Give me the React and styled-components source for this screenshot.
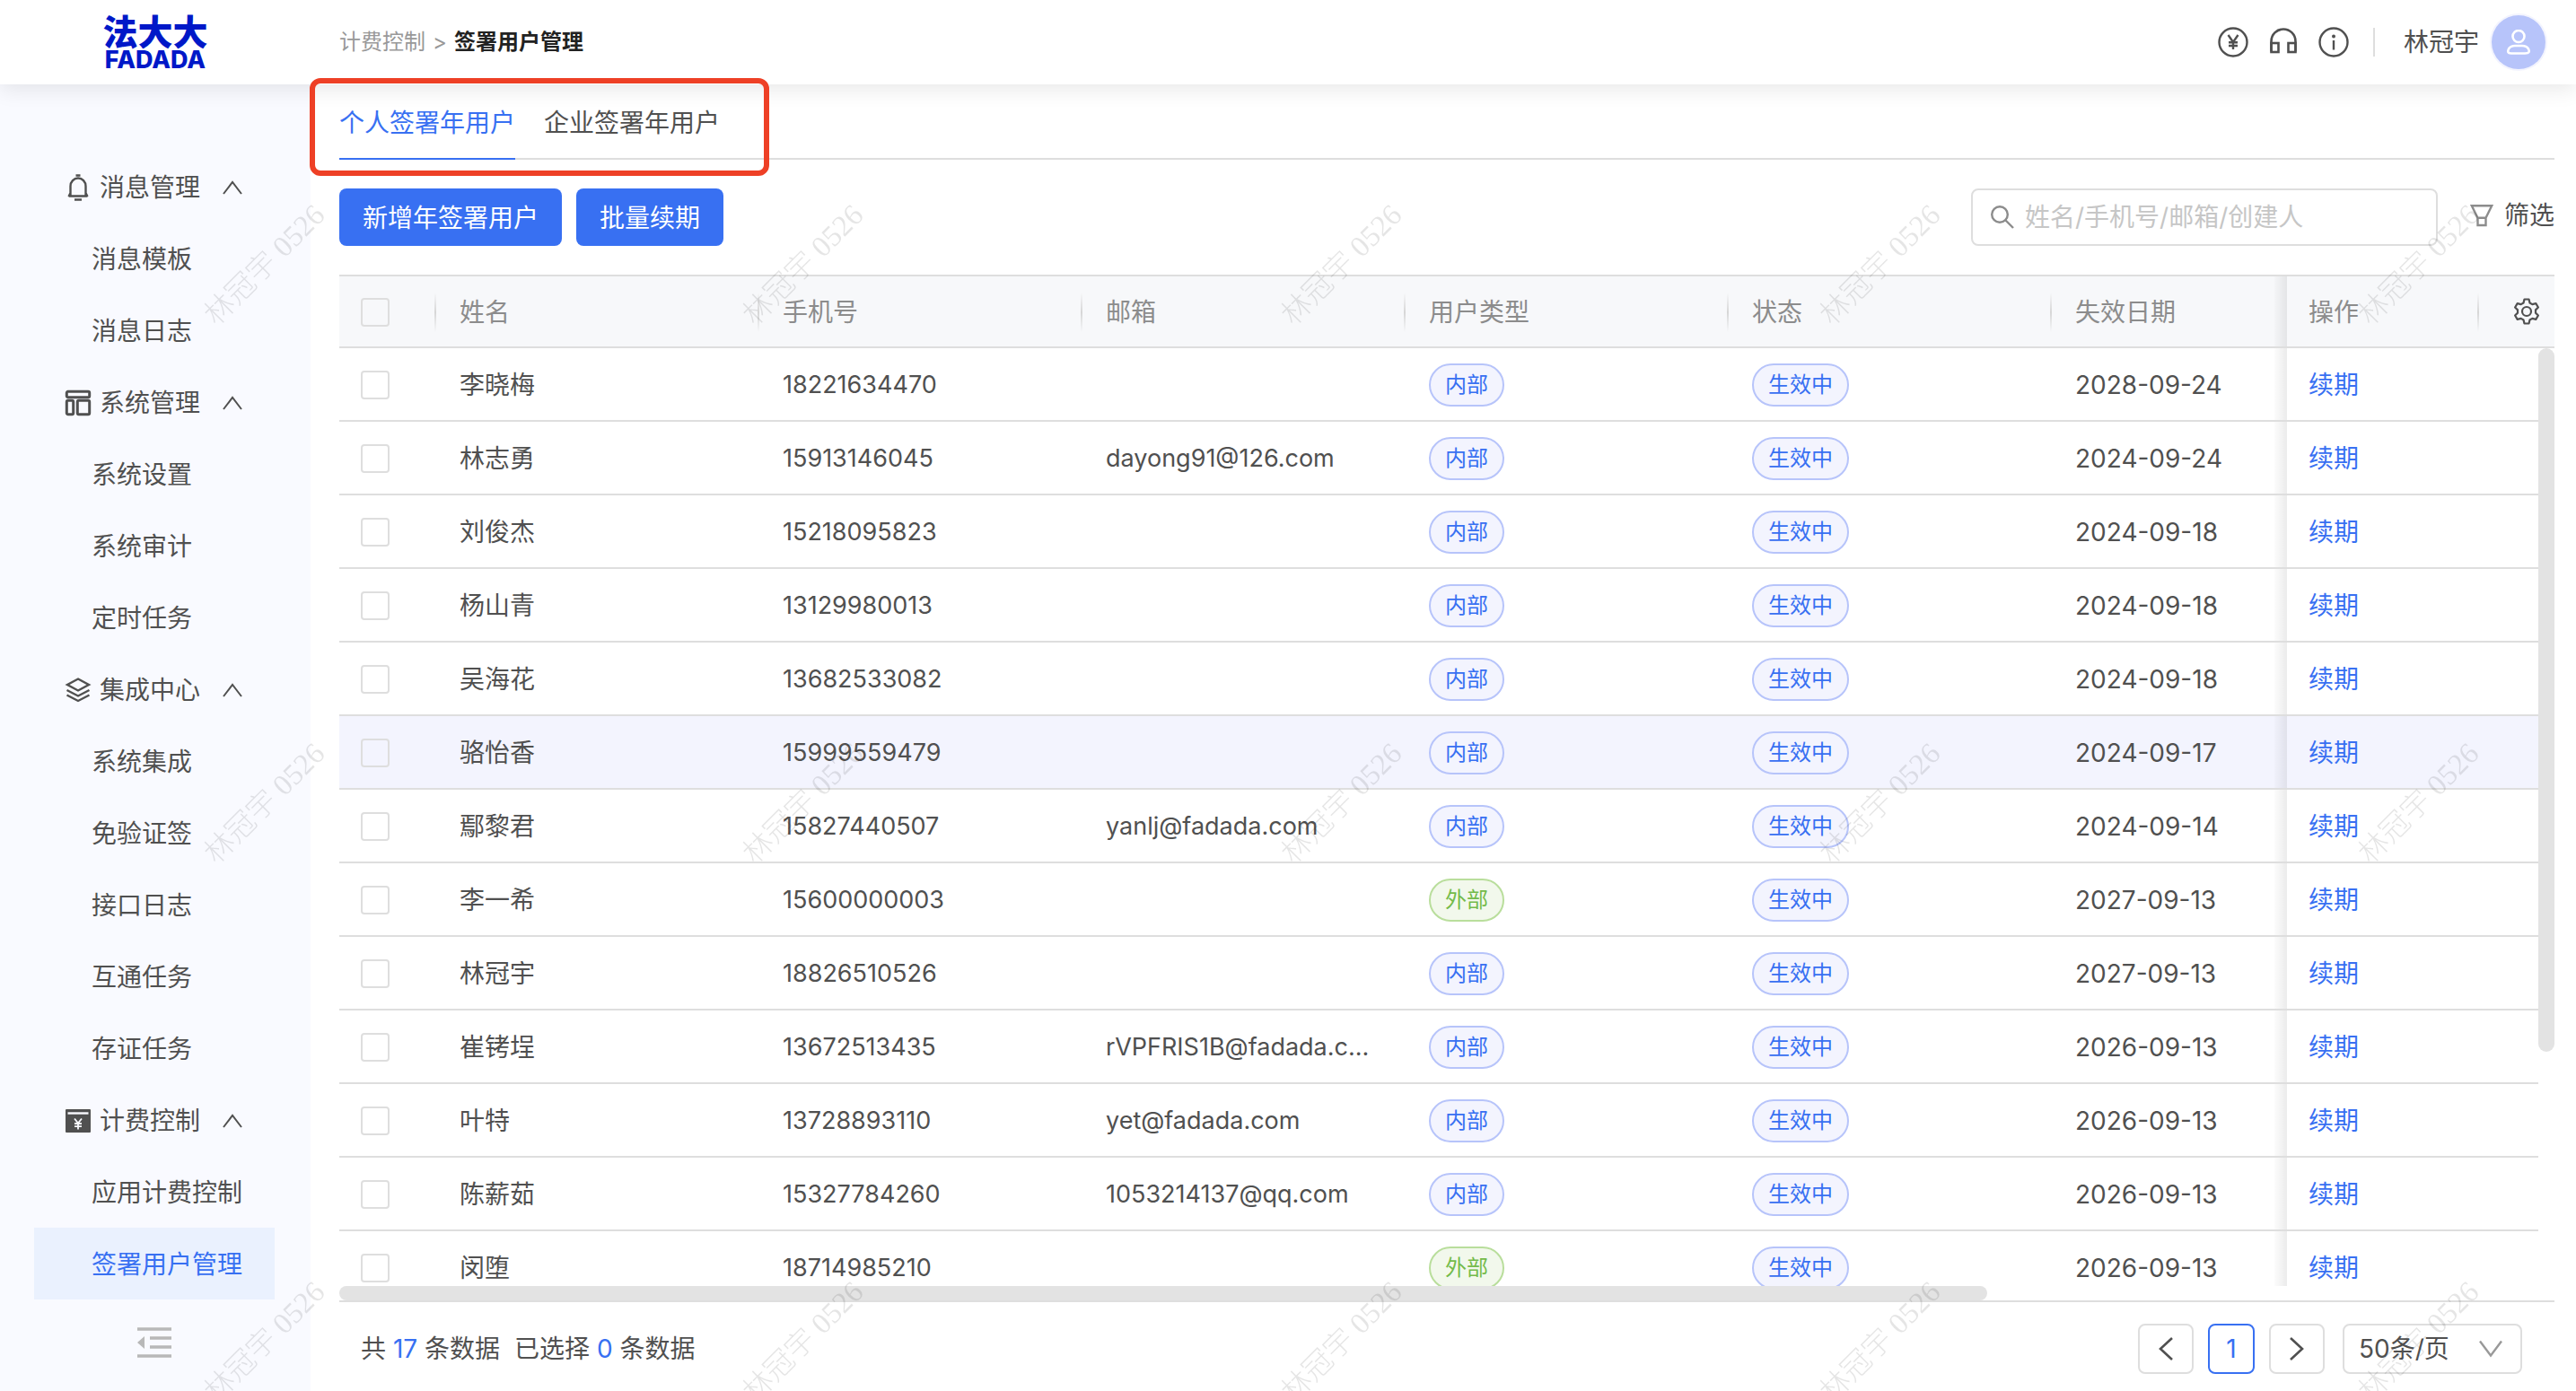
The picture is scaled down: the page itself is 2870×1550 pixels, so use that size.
import React from "react";
import styled, { createGlobalStyle } from "styled-components";

const GlobalStyle = createGlobalStyle`
  *, *::before, *::after {
    box-sizing: border-box;
  }
  body {
    margin: 0;
    background: #fff;
    color: #505050;
    font: 28px/40px Inter, "Noto Sans CJK SC", sans-serif;
  }
  button, input, select {
    font: inherit;
    color: inherit;
    margin: 0;
  }
  button {
    padding: 0;
    border: 0;
    background: none;
    cursor: pointer;
  }
  a {
    color: inherit;
    text-decoration: none;
  }
`;

const Page = styled.div`
  height: 100vh;
  display: flex;
  flex-direction: column;
  overflow: hidden;
`;

// Header
const Header = styled.header`
  height: 94px;
  flex: none;
  display: flex;
  align-items: center;
  padding-right: 34px;
  background: #fff;
  box-shadow: 0 6px 22px rgba(0, 0, 0, 0.09);
  position: relative;
  z-index: 2;
`;
const Logo = styled.a`
  width: 346px;
  display: flex;
  flex-direction: column;
  align-items: center;
  color: #0018c8;
`;
const LogoName = styled.span`
  font: 900 39px/39px "Noto Sans CJK SC", sans-serif;
`;
const LogoLatin = styled.span`
  font: 800 27px/27px Inter, sans-serif;
`;
const Breadcrumb = styled.nav`
  display: flex;
  gap: 8px;
  padding-left: 32px;
  flex: 1;
  font-size: 24px;
  color: #999;
  strong {
    color: #222;
    font-weight: 700;
  }
`;
const HeaderIcons = styled.div`
  display: flex;
  gap: 22px;
`;
const IconButton = styled.button`
  display: flex;
  align-items: center;
  justify-content: center;
`;
const Divider = styled.span`
  width: 2px;
  height: 32px;
  margin: 0 32px 0 27px;
  background: #dedede;
`;
const User = styled.button`
  display: flex;
  align-items: center;
  gap: 14px;
`;
const Avatar = styled.span`
  width: 60px;
  height: 60px;
  display: flex;
  align-items: center;
  justify-content: center;
  border-radius: 50%;
  background: #b7c4fa;
  box-shadow: 0 0 0 2px #f3f4fe;
`;

// Sidebar
const Body = styled.div`
  flex: 1;
  min-height: 0;
  display: flex;
`;
const Sidebar = styled.aside`
  width: 346px;
  flex: none;
  display: flex;
  flex-direction: column;
  padding: 74px 40px 0 38px;
  background: #f9faff;
`;
const GroupTitle = styled.button`
  width: 100%;
  height: 80px;
  display: flex;
  align-items: center;
  padding: 2px 0 0 34px;
  gap: 9px;
  svg:last-child {
    margin-left: 16px;
  }
`;
const MenuItem = styled.a`
  height: 80px;
  display: flex;
  align-items: center;
  padding: 2px 0 0 64px;
  color: ${(p) => (p.$active ? "#3870f2" : "inherit")};
  background: ${(p) => (p.$active ? "#eaf1fe" : "none")};
`;
const Collapse = styled.button`
  height: 96px;
  display: flex;
  align-items: center;
  justify-content: center;
`;

// Content
const Main = styled.main`
  flex: 1;
  min-width: 0;
  display: flex;
  flex-direction: column;
  padding: 0 24px 0 32px;
`;
const Tabs = styled.nav`
  height: 84px;
  flex: none;
  display: flex;
  gap: 32px;
  border-bottom: 2px solid #dedede;
  position: relative;
`;
const Tab = styled.a`
  margin-bottom: -2px;
  padding-top: 4px;
  display: flex;
  align-items: center;
  color: ${(p) => (p.$active ? "#3870f2" : "inherit")};
  border-bottom: 2px solid ${(p) => (p.$active ? "#3870f2" : "transparent")};
`;
const Highlight = styled.span`
  position: absolute;
  z-index: 3;
  top: -7px;
  left: -33px;
  width: 512px;
  height: 109px;
  border: 6px solid #ee4026;
  border-radius: 12px;
  pointer-events: none;
`;
const Toolbar = styled.div`
  flex: none;
  display: flex;
  align-items: center;
  gap: 16px;
  padding: 32px 0;
`;
const PrimaryButton = styled.button`
  height: 64px;
  padding: 2px 26px 0;
  border-radius: 8px;
  background: #3870f2;
  color: #fff;
`;
const SearchBox = styled.label`
  width: 520px;
  height: 64px;
  margin-left: auto;
  display: flex;
  align-items: center;
  gap: 12px;
  padding: 0 20px;
  border: 2px solid #dedede;
  border-radius: 8px;
  input {
    flex: 1;
    min-width: 0;
    padding: 0;
    border: 0;
    outline: 0;
    background: none;
  }
  input::placeholder {
    color: #c6c6c6;
  }
`;
const FilterButton = styled.button`
  display: flex;
  align-items: center;
  gap: 12px;
  padding: 0 0 4px 20px;
`;

// Table
const TableArea = styled.div`
  flex: 1;
  min-height: 0;
  overflow: hidden;
  position: relative;
`;
const Table = styled.table`
  width: 100%;
  min-width: 2400px;
  table-layout: fixed;
  border-collapse: separate;
  border-spacing: 0;
`;
const Col = styled.col`
  width: ${(p) => (p.$width ? `${p.$width}px` : "auto")};
`;
const Th = styled.th`
  height: 82px;
  padding: 2px 0 0 ${(p) => (p.$check ? 24 : 26)}px;
  text-align: left;
  font-weight: 400;
  color: #8c8c8c;
  background: #f7f8fa;
  border-top: 2px solid #dedede;
  border-bottom: 2px solid #dedede;
  position: relative;
  &::after {
    content: "";
    display: ${(p) => (p.$line ? "block" : "none")};
    position: absolute;
    top: 18px;
    right: -1px;
    width: 3px;
    height: 44px;
    background: linear-gradient(transparent, #d6d6d6, transparent);
  }
`;
const fixedShadow = `
  position: relative;
  padding-left: 24px;
  &::before {
    content: "";
    position: absolute;
    top: 0;
    bottom: 0;
    left: -14px;
    width: 14px;
    background: linear-gradient(to right, rgba(0, 0, 0, 0.01), rgba(0, 0, 0, 0.08));
  }
`;
const ActionTh = styled(Th)`
  ${fixedShadow}
`;
const GearTh = styled(Th)`
  padding: 0 16px 0 0;
  button {
    margin-left: auto;
  }
`;
const Tr = styled.tr`
  background: ${(p) => (p.$active ? "#f3f4fe" : "#fff")};
`;
const Td = styled.td`
  height: 82px;
  padding: 2px 0 0 ${(p) => (p.$check ? 24 : 26)}px;
  border-bottom: 2px solid #dedede;
  font-size: ${(p) => (p.$compact ? 27 : 28)}px;
  white-space: nowrap;
`;
const ActionTd = styled(Td)`
  ${fixedShadow}
  color: #3870f2;
`;
const Checkbox = styled.input`
  appearance: none;
  display: block;
  width: 32px;
  height: 32px;
  margin: 0;
  border: 2px solid #dedede;
  border-radius: 4px;
`;
const Tag = styled.span`
  display: flex;
  align-items: center;
  width: fit-content;
  height: 48px;
  padding: 0 16px;
  font-size: 24px;
  border-radius: 24px;
  color: ${(p) => (p.$green ? "#74bb4a" : "#3870f2")};
  background: ${(p) => (p.$green ? "#f2f8ec" : "#f3f4fe")};
  border: 2px solid ${(p) => (p.$green ? "#b9de9c" : "#b7c4fa")};
`;
const TrackY = styled.div`
  position: absolute;
  top: 82px;
  right: 0;
  bottom: 0;
  width: 18px;
  background: #fff;
`;
const ThumbY = styled.div`
  height: 75%;
  border-radius: 9px;
  background: #e3e3e3;
`;
const TrackX = styled.div`
  height: 16px;
  flex: none;
  padding-right: 632px;
`;
const ThumbX = styled.div`
  height: 16px;
  border-radius: 8px;
  background: #e3e3e3;
`;

// Footer
const Footer = styled.footer`
  height: 101px;
  flex: none;
  display: flex;
  align-items: center;
  padding: 5px 36px 0 24px;
  border-top: 2px solid #dedede;
`;
const Summary = styled.p`
  margin: 0 auto 0 0;
  display: flex;
  gap: 16px;
  b {
    font-weight: 400;
    color: #3870f2;
  }
`;
const PageButton = styled.button`
  width: ${(p) => (p.$active ? 52 : 62)}px;
  height: 56px;
  margin-right: 16px;
  display: flex;
  align-items: center;
  justify-content: center;
  border: 2px solid ${(p) => (p.$active ? "#3870f2" : "#dedede")};
  border-radius: 8px;
  color: ${(p) => (p.$active ? "#3870f2" : "inherit")};
`;
const SizeBox = styled.label`
  width: 200px;
  height: 56px;
  margin-left: 4px;
  display: flex;
  align-items: center;
  padding: 0 20px 0 16px;
  border: 2px solid #dedede;
  border-radius: 8px;
  color: #999;
  select {
    appearance: none;
    flex: 1;
    padding: 0;
    border: 0;
    outline: 0;
    background: none;
    color: #505050;
  }
`;

const Watermarks = styled.div`
  position: fixed;
  inset: 0;
  z-index: 4;
  overflow: hidden;
  pointer-events: none;
  display: grid;
  grid-template: repeat(3, 600px) / repeat(5, 600px);
`;
const Watermark = styled.span`
  display: flex;
  align-items: center;
  justify-content: center;
  padding: 0 10px 10px 0;
  span {
    transform: rotate(-45deg);
    font: 200 33px/40px "Liberation Serif", "Noto Sans CJK SC", serif;
    color: rgba(0, 0, 0, 0.1);
    white-space: nowrap;
  }
`;

// Icons
const Svg = ({ w = 30, h = w, sw = 2, children, color = "currentColor" }) => (
  <svg
    width={w}
    height={h}
    viewBox={`0 0 ${w} ${h}`}
    fill="none"
    stroke={color}
    strokeWidth={sw}
    aria-hidden="true"
  >
    {children}
  </svg>
);
const BellIcon = () => (
  <Svg sw={2.4}>
    <path d="M4.5 24.5h21M6.5 24V13.500a8.500 9 0 0 1 17 0V24M4.500 25l2-4M25.500 25l-2-4M12.500 1.500h5M11 28.500h8" />
  </Svg>
);
const LayoutIcon = () => (
  <Svg sw={3}>
    <rect x="2.300" y="2.300" width="25.400" height="6.400" rx="1.500" />
    <rect x="2.300" y="12.300" width="7.400" height="15.400" rx="1.500" />
    <rect x="14.300" y="12.300" width="13.400" height="15.400" rx="1.500" />
  </Svg>
);
const LayersIcon = () => (
  <Svg sw={2.4}>
    <path d="M15 2.500 27 9l-12 6.500L3 9zM2.500 15 15 21.500 27.500 15M2.500 20.500 15 27l12.500-6.500" />
  </Svg>
);
const BillingIcon = () => (
  <Svg>
    <rect x="1" y="2" width="28" height="26" rx="1" fill="currentColor" stroke="none" />
    <path d="M3.500 6.500h23" stroke="#f9faff" strokeWidth="2.400" />
    <path d="m11 12.500 4 5 4-5M15 17v7.500M11 18h8M11 21.200h8" stroke="#f9faff" strokeWidth="1.800" />
  </Svg>
);
const UpIcon = () => (
  <Svg w={22} h={18}>
    <path d="m1 16 10-13 10 13" />
  </Svg>
);
const CollapseIcon = () => (
  <Svg w={38} h={34} sw={3.4} color="#b8b8b8">
    <path d="M0 2h38M14 12h24M14 22h24M0 32h38" />
    <path d="M8 10v14L0 17z" fill="#b8b8b8" stroke="none" />
  </Svg>
);
const YuanIcon = () => (
  <Svg w={34} sw={2.4}>
    <circle cx="17" cy="17" r="15.500" />
    <path d="m11.500 9 5.500 8 5.500-8M17 16.500V25M12 17.200h10M12 21h10" />
  </Svg>
);
const HeadphoneIcon = () => (
  <Svg w={34} sw={2.6}>
    <path d="M3.500 27.500V16a13.500 13.500 0 0 1 27 0v11.500" />
    <rect x="3.500" y="18" width="8" height="10" />
    <rect x="22.500" y="18" width="8" height="10" />
  </Svg>
);
const InfoIcon = () => (
  <Svg w={34} sw={2.4}>
    <circle cx="17" cy="17" r="15.500" />
    <path d="M17 15v10.500" />
    <circle cx="17" cy="10.500" r="2" fill="currentColor" stroke="none" />
  </Svg>
);
const UserIcon = () => (
  <Svg w={28} sw={2.6} color="#fff">
    <circle cx="14" cy="7.500" r="6.500" />
    <path d="M6 26.500h15c5 0 5.500-2 4-5-1.500-2.500-4-3.500-7-3.500h-8c-3 0-5.500 1-7 3.500-1.500 3-1 5 3 5z" />
  </Svg>
);
const SearchIcon = () => (
  <Svg w={26} sw={2.4} color="#8c8c8c">
    <circle cx="10" cy="10" r="8.800" />
    <path d="m16.500 16.500 8.500 8.500" />
  </Svg>
);
const FilterIcon = () => (
  <Svg w={26} sw={2.4} color="#8c8c8c">
    <path d="M1.800 2.200h22.400l-6.700 13.500h-9zM8.500 15.700V24h9v-8.300" />
  </Svg>
);
const GearIcon = () => (
  <Svg w={30} sw={2.2} color="#505050">
    <path
      strokeLinejoin="round"
      d="M12.500 1.500h5l1 4 2.800 1.600 4-1 2.600 4.400-2.900 2.900v3.200l2.900 2.900-2.600 4.400-4-1-2.800 1.600-1 4h-5l-1-4-2.800-1.600-4 1-2.600-4.400L5 16.600v-3.200l-2.900-2.900 2.600-4.400 4 1 2.800-1.600z"
    />
    <circle cx="15" cy="15" r="5" />
  </Svg>
);
const PrevIcon = () => (
  <Svg w={18} h={26} sw={2.6}>
    <path d="M16 1 3 13l13 12" />
  </Svg>
);
const NextIcon = () => (
  <Svg w={18} h={26} sw={2.6}>
    <path d="m2 1 13 12L2 25" />
  </Svg>
);
const DownIcon = () => (
  <Svg w={26} h={20} sw={2.4}>
    <path d="m1 1.500 12 16 12-16" />
  </Svg>
);

const menu = [
  { title: "消息管理", icon: <BellIcon />, items: ["消息模板", "消息日志"] },
  {
    title: "系统管理",
    icon: <LayoutIcon />,
    items: ["系统设置", "系统审计", "定时任务"],
  },
  {
    title: "集成中心",
    icon: <LayersIcon />,
    items: ["系统集成", "免验证签", "接口日志", "互通任务", "存证任务"],
  },
  {
    title: "计费控制",
    icon: <BillingIcon />,
    items: ["应用计费控制", "签署用户管理"],
  },
];

const users = [
  ["李晓梅", "18221634470", "", "内部", "2028-09-24"],
  ["林志勇", "15913146045", "dayong91@126.com", "内部", "2024-09-24"],
  ["刘俊杰", "15218095823", "", "内部", "2024-09-18"],
  ["杨山青", "13129980013", "", "内部", "2024-09-18"],
  ["吴海花", "13682533082", "", "内部", "2024-09-18"],
  ["骆怡香", "15999559479", "", "内部", "2024-09-17"],
  ["鄢黎君", "15827440507", "yanlj@fadada.com", "内部", "2024-09-14"],
  ["李一希", "15600000003", "", "外部", "2027-09-13"],
  ["林冠宇", "18826510526", "", "内部", "2027-09-13"],
  ["崔铐埕", "13672513435", "rVPFRIS1B@fadada.c...", "内部", "2026-09-13"],
  ["叶特", "13728893110", "yet@fadada.com", "内部", "2026-09-13"],
  ["陈薪茹", "15327784260", "1053214137@qq.com", "内部", "2026-09-13"],
  ["闵堕", "18714985210", "", "外部", "2026-09-13"],
];

function UserTable() {
  return (
    <TableArea>
      <Table>
        <colgroup>
          <Col $width={108} />
          <Col $width={360} />
          <Col $width={360} />
          <Col $width={360} />
          <Col $width={360} />
          <Col $width={360} />
          <Col />
          <Col $width={214} />
          <Col $width={84} />
        </colgroup>
        <thead>
          <tr>
            <Th $check $line>
              <Checkbox type="checkbox" aria-label="全选" />
            </Th>
            <Th $line>姓名</Th>
            <Th $line>手机号</Th>
            <Th $line>邮箱</Th>
            <Th $line>用户类型</Th>
            <Th $line>状态</Th>
            <Th>失效日期</Th>
            <ActionTh $line>操作</ActionTh>
            <GearTh>
              <IconButton aria-label="列设置">
                <GearIcon />
              </IconButton>
            </GearTh>
          </tr>
        </thead>
        <tbody>
          {users.map(([name, phone, mail, type, date]) => (
            <Tr key={phone} $active={name === "骆怡香"}>
              <Td $check>
                <Checkbox type="checkbox" aria-label={name} />
              </Td>
              <Td>{name}</Td>
              <Td $compact>{phone}</Td>
              <Td $compact>{mail}</Td>
              <Td>
                <Tag $green={type === "外部"}>{type}</Tag>
              </Td>
              <Td>
                <Tag>生效中</Tag>
              </Td>
              <Td>{date}</Td>
              <ActionTd>
                <a href="#renew">续期</a>
              </ActionTd>
              <Td />
            </Tr>
          ))}
        </tbody>
      </Table>
      <TrackY>
        <ThumbY />
      </TrackY>
    </TableArea>
  );
}

export default function App() {
  return (
    <Page>
      <GlobalStyle />
      <Header>
        <Logo href="#home">
          <LogoName>法大大</LogoName>
          <LogoLatin>FADADA</LogoLatin>
        </Logo>
        <Breadcrumb>
          <a href="#billing">计费控制</a>
          <span>&gt;</span>
          <strong>签署用户管理</strong>
        </Breadcrumb>
        <HeaderIcons>
          <IconButton aria-label="费用">
            <YuanIcon />
          </IconButton>
          <IconButton aria-label="客服">
            <HeadphoneIcon />
          </IconButton>
          <IconButton aria-label="信息">
            <InfoIcon />
          </IconButton>
        </HeaderIcons>
        <Divider />
        <User>
          林冠宇
          <Avatar>
            <UserIcon />
          </Avatar>
        </User>
      </Header>
      <Body>
        <Sidebar>
          {menu.map((group) => (
            <div key={group.title}>
              <GroupTitle>
                {group.icon}
                {group.title}
                <UpIcon />
              </GroupTitle>
              {group.items.map((item) => (
                <MenuItem key={item} href="#menu" $active={item === "签署用户管理"}>
                  {item}
                </MenuItem>
              ))}
            </div>
          ))}
          <Collapse aria-label="收起菜单">
            <CollapseIcon />
          </Collapse>
        </Sidebar>
        <Main>
          <Tabs>
            <Tab href="#personal" $active>
              个人签署年用户
            </Tab>
            <Tab href="#company">企业签署年用户</Tab>
            <Highlight />
          </Tabs>
          <Toolbar>
            <PrimaryButton>新增年签署用户</PrimaryButton>
            <PrimaryButton>批量续期</PrimaryButton>
            <SearchBox>
              <SearchIcon />
              <input
                type="text"
                aria-label="搜索"
                placeholder="姓名/手机号/邮箱/创建人"
              />
            </SearchBox>
            <FilterButton>
              <FilterIcon />
              筛选
            </FilterButton>
          </Toolbar>
          <UserTable />
          <TrackX>
            <ThumbX />
          </TrackX>
          <Footer>
            <Summary>
              <span>
                共 <b>17</b> 条数据
              </span>
              <span>
                已选择 <b>0</b> 条数据
              </span>
            </Summary>
            <PageButton aria-label="上一页">
              <PrevIcon />
            </PageButton>
            <PageButton $active>1</PageButton>
            <PageButton aria-label="下一页">
              <NextIcon />
            </PageButton>
            <SizeBox>
              <select aria-label="每页条数">
                <option>50条/页</option>
              </select>
              <DownIcon />
            </SizeBox>
          </Footer>
        </Main>
      </Body>
      <Watermarks aria-hidden="true">
        {Array.from({ length: 15 }, (_, i) => (
          <Watermark key={i}>
            <span>林冠宇 0526</span>
          </Watermark>
        ))}
      </Watermarks>
    </Page>
  );
}
